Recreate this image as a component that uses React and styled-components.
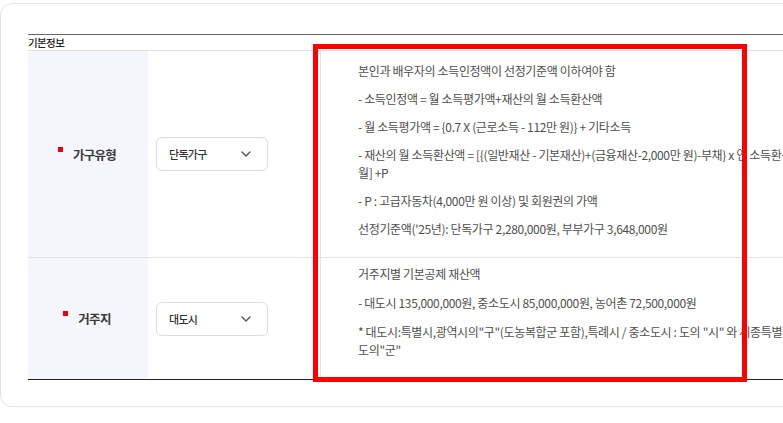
import React from 'react'
import styled, { createGlobalStyle } from 'styled-components'

const GlobalStyle = createGlobalStyle`
  html, body {
    margin: 0;
    padding: 0;
    background: #fff;
    overflow: hidden;
    font-family: "Noto Sans CJK KR", "Noto Sans", sans-serif;
  }
`

// each paragraph is a list of its visual lines
const rows = [
  {
    label: '가구유형',
    value: '단독가구',
    pad: '11px 0 9px',
    paras: [
      ['본인과 배우자의 소득인정액이 선정기준액 이하여야 함'],
      ['- 소득인정액 = 월 소득평가액+재산의 월 소득환산액'],
      ['- 월 소득평가액 = {0.7 X (근로소득 - 112만 원)} + 기타소득'],
      [
        '- 재산의 월 소득환산액 = [{(일반재산 - 기본재산)+(금융재산-2,000만 원)-부채} x 연 소득환산율(12%) ÷ 12개',
        '월] +P',
      ],
      ['- P : 고급자동차(4,000만 원 이상) 및 회원권의 가액'],
      ["선정기준액('25년): 단독가구 2,280,000원, 부부가구 3,648,000원"],
    ],
  },
  {
    label: '거주지',
    value: '대도시',
    pad: '7px 0 9px',
    gap: '11px',
    paras: [
      ['거주지별 기본공제 재산액'],
      ['- 대도시 135,000,000원, 중소도시 85,000,000원, 농어촌 72,500,000원'],
      [
        '* 대도시:특별시,광역시의"구"(도농복합군 포함),특례시 / 중소도시 : 도의 "시" 와 세종특별자치시, 제주특별자치도 / 농어촌 :',
        '도의"군"',
      ],
    ],
  },
]

export default function App() {
  return (
    <>
      <GlobalStyle />
      <Card>
        <Table>
          <Caption>기본정보</Caption>
          {rows.map((row, i) => (
            <Row key={row.label} last={i === rows.length - 1}>
              <LabelCell>
                <Label>{row.label}</Label>
              </LabelCell>
              <SelectCell>
                <SelectBox>
                  <span>{row.value}</span>
                  <svg width="10" height="6" viewBox="0 0 10 6" fill="none">
                    <path d="M1 1l4 4 4-4" stroke="#555" strokeWidth="1.4" strokeLinecap="round" strokeLinejoin="round" />
                  </svg>
                </SelectBox>
              </SelectCell>
              <TextCell pad={row.pad}>
                {row.paras.map((lines) => (
                  <Para key={lines[0]} gap={row.gap}>
                    {lines.map((l) => (
                      <Line key={l}>{l}</Line>
                    ))}
                  </Para>
                ))}
              </TextCell>
            </Row>
          ))}
          <Highlight />
        </Table>
      </Card>
    </>
  )
}

const Card = styled.div`
  margin-top: 3px;
  width: 1300px;
  height: 404px;
  box-sizing: border-box;
  border: 1px solid #e3e3e3;
  border-radius: 12px;
  padding: 30px 0 0 27px;
`

const Table = styled.div`
  position: relative;
  border-top: 1px solid #666;
  border-bottom: 1px solid #222;
`

const Caption = styled.div`
  height: 15px;
  line-height: 15px;
  font-size: 10.5px;
  font-weight: 500;
  color: #222;
  letter-spacing: -0.6px;
  border-bottom: 1px solid #e0e0e0;
`

const Row = styled.div`
  display: grid;
  grid-template-columns: 120px 172px 1fr;
  border-bottom: ${(p) => (p.last ? 'none' : '1px solid #e2e2e2')};
`

const LabelCell = styled.div`
  background: #f4f6fb;
  display: flex;
  align-items: center;
  justify-content: center;
  padding-left: 4px;
`

const Label = styled.span`
  position: relative;
  font-size: 12.5px;
  font-weight: 700;
  color: #3a3a3a;
  letter-spacing: -0.7px;
  padding-left: 9px;
  &::before {
    content: '';
    position: absolute;
    left: -6px;
    top: 2px;
    width: 5px;
    height: 5px;
    background: #e60012;
  }
`

const SelectCell = styled.div`
  display: flex;
  align-items: center;
  padding-left: 8px;
`

const SelectBox = styled.div`
  width: 112px;
  height: 34px;
  box-sizing: border-box;
  border: 1px solid #dcdcdc;
  border-radius: 6px;
  display: flex;
  align-items: center;
  justify-content: space-between;
  padding: 0 16px 0 12px;
  font-size: 11px;
  font-weight: 500;
  color: #333;
  letter-spacing: -0.7px;
`

const TextCell = styled.div`
  border-left: 1px solid #e2e2e2;
  padding: ${(p) => p.pad};
  padding-left: 37px;
`

const Para = styled.p`
  margin: 0 0 ${(p) => p.gap || '10px'};
  font-size: 12px;
  line-height: 18px;
  color: #4f4f4f;
  letter-spacing: -0.35px;
`

const Line = styled.span`
  display: block;
  white-space: nowrap;
`

const Highlight = styled.div`
  position: absolute;
  left: 285px;
  top: 9px;
  width: 434px;
  height: 338px;
  box-sizing: border-box;
  border: 5px solid #ff0000;
  pointer-events: none;
`
